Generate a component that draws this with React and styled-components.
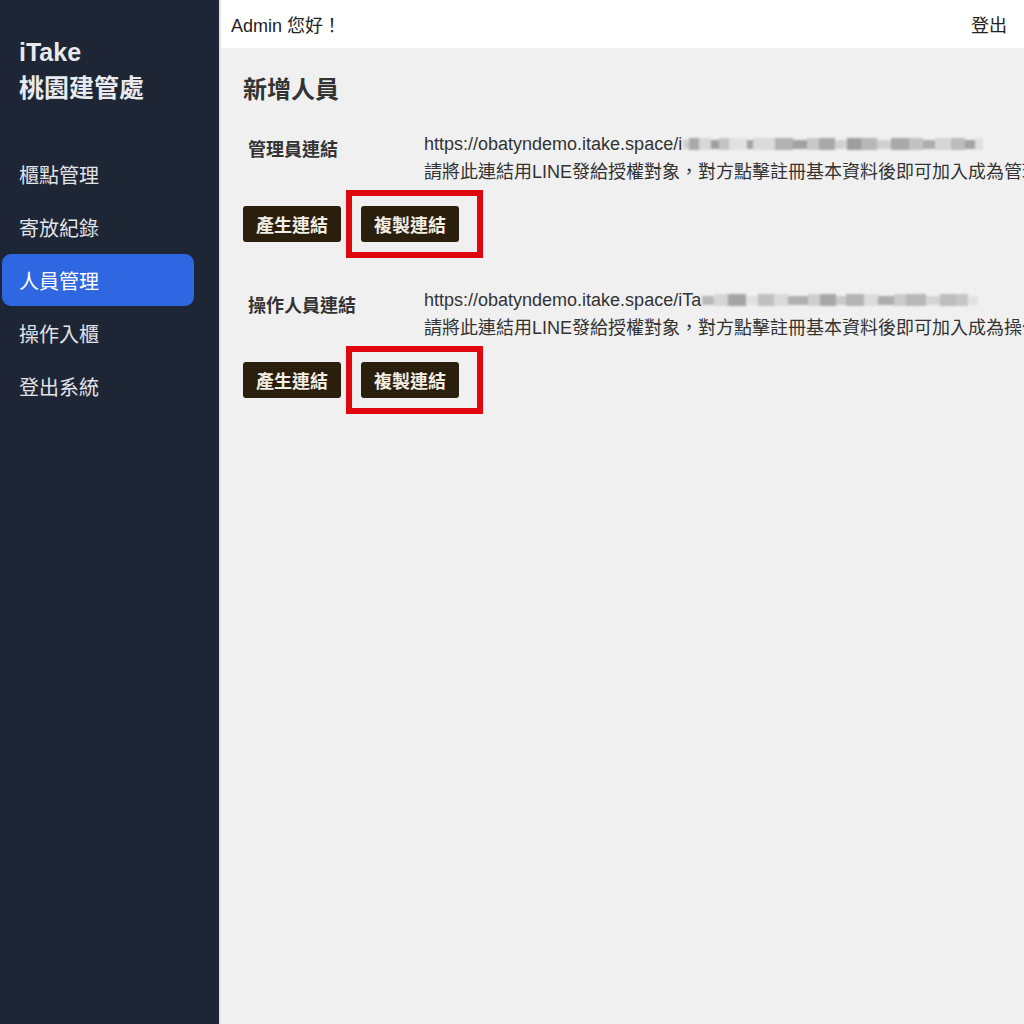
import React from "react"
import styled, { createGlobalStyle } from "styled-components"

const GlobalStyle = createGlobalStyle`
  html, body {
    margin: 0;
    padding: 0;
    height: 100%;
  }
  body {
    font-family: "Liberation Sans", "Noto Sans CJK TC", sans-serif;
    background: #f0f0f0;
  }
  #root {
    height: 100%;
  }
`

const Layout = styled.div`
  display: flex;
  height: 1024px;
  overflow: hidden;
`

const Sidebar = styled.aside`
  width: 219px;
  flex-shrink: 0;
  background: #1e2535;
  color: #e3e5ea;
  display: flex;
  flex-direction: column;
`

const Brand = styled.div`
  padding: 34px 0 0 19px;
  font-size: 25px;
  font-weight: 700;
  line-height: 36px;
  color: #e8eaee;
`

const Nav = styled.nav`
  margin-top: 42px;
  padding: 0 25px 0 2px;
  display: flex;
  flex-direction: column;
  gap: 1px;
`

const NavItem = styled.div`
  height: 52px;
  display: flex;
  align-items: center;
  padding-left: 17px;
  font-size: 20px;
  border-radius: 9px;
  color: ${(p) => (p.$active ? "#ffffff" : "#e0e3e8")};
  background: ${(p) => (p.$active ? "#2f67e3" : "transparent")};
`

const Main = styled.main`
  flex: 1;
  min-width: 0;
  display: flex;
  flex-direction: column;
  background: #f0f0f0;
  border-left: 2px solid #e4e4e4;
  color: #333;
`

const TopBar = styled.header`
  height: 48px;
  flex-shrink: 0;
  background: #fff;
  display: flex;
  align-items: center;
  justify-content: space-between;
  padding: 0 17px 0 10px;
  font-size: 18px;
  color: #222;
`

const Content = styled.section`
  padding: 26px 0 0 22px;
`

const Title = styled.h2`
  margin: 0;
  font-size: 24px;
  font-weight: 600;
  line-height: 32px;
  color: #333;
`

const Block = styled.div`
  margin-top: ${(p) => p.$top}px;
`

const LinkRow = styled.div`
  display: grid;
  grid-template-columns: 176px minmax(0, 1fr);
  margin-left: 5px;
`

const Label = styled.div`
  font-size: 18px;
  font-weight: 600;
  line-height: 28px;
  padding-top: 6px;
  color: #333;
`

const Info = styled.div`
  font-size: 18px;
  line-height: 28px;
  white-space: nowrap;
  overflow: hidden;
  color: #333;
`

const UrlLine = styled.div`
  display: flex;
  align-items: center;
`

const Blur = styled.span`
  display: inline-flex;
  align-items: center;
  height: 14px;
  margin-left: 1px;
  filter: blur(0.8px);
`

const Pixel = styled.span`
  display: inline-block;
  height: ${(p) => p.$h || 10}px;
  width: ${(p) => p.$w}px;
  background: ${(p) => p.$c};
`

const Actions = styled.div`
  display: flex;
  gap: 20px;
  margin-top: 20px;
`

const Button = styled.button`
  height: 36px;
  padding: 0 13px;
  border: none;
  border-radius: 3px;
  background: #2a1e0d;
  color: #f2eee4;
  font-family: inherit;
  font-size: 18px;
  font-weight: 600;
  cursor: pointer;
`

const Marked = styled.div`
  position: relative;
`

const Highlight = styled.span`
  position: absolute;
  top: -16px;
  bottom: -16px;
  left: -15px;
  right: -24px;
  border: 6px solid #e0070f;
  pointer-events: none;
`

const blurA = [
  [6, "#cfcfcf"], [10, "#a9a9a9"], [12, "#d8d8d8"], [8, "#9e9e9e"], [10, "#c4c4c4"],
  [18, "#e2e2e2"], [6, "#a6a6a6"], [22, "#dadada"], [18, "#b2b2b2"], [14, "#a1a1a1"],
  [12, "#c8c8c8"], [16, "#a9a9a9"], [12, "#d2d2d2"], [14, "#9d9d9d"], [16, "#b7b7b7"],
  [14, "#d0d0d0"], [18, "#a8a8a8"], [14, "#c2c2c2"], [12, "#adadad"], [16, "#d5d5d5"],
  [14, "#bcbcbc"], [10, "#a4a4a4"], [8, "#e0e0e0"],
]

const blurB = [
  [12, "#b9b9b9"], [14, "#d6d6d6"], [18, "#a4a4a4"], [12, "#e0e0e0"], [16, "#c0c0c0"],
  [14, "#dadada"], [20, "#b0b0b0"], [12, "#cfcfcf"], [16, "#a7a7a7"], [10, "#c9c9c9"],
  [18, "#b4b4b4"], [14, "#dcdcdc"], [16, "#adadad"], [12, "#cbcbcb"], [20, "#b8b8b8"],
  [14, "#d4d4d4"], [16, "#bdbdbd"], [12, "#c6c6c6"], [10, "#e2e2e2"],
]

const navItems = ["櫃點管理", "寄放紀錄", "人員管理", "操作入櫃", "登出系統"]

const links = [
  {
    label: "管理員連結",
    prefix: "https://obatyndemo.itake.space/i",
    blur: blurA,
    role: "管理員",
    top: 24,
  },
  {
    label: "操作人員連結",
    prefix: "https://obatyndemo.itake.space/iTa",
    blur: blurB,
    role: "操作人員",
    top: 44,
  },
]

function LinkBlock({ item }) {
  return (
    <Block $top={item.top}>
      <LinkRow>
        <Label>{item.label}</Label>
        <Info>
          <UrlLine>
            {item.prefix}
            <Blur>
              {item.blur.map(([w, c], i) => (
                <Pixel key={i} $w={w} $c={c} $h={i % 3 === 0 ? 9 : 12} />
              ))}
            </Blur>
          </UrlLine>
          <div>請將此連結用LINE發給授權對象，對方點擊註冊基本資料後即可加入成為{item.role}</div>
        </Info>
      </LinkRow>
      <Actions>
        <Button>產生連結</Button>
        <Marked>
          <Button>複製連結</Button>
          <Highlight />
        </Marked>
      </Actions>
    </Block>
  )
}

export default function App() {
  return (
    <>
      <GlobalStyle />
      <Layout>
        <Sidebar>
          <Brand>
            <div>iTake</div>
            <div>桃園建管處</div>
          </Brand>
          <Nav>
            {navItems.map((n) => (
              <NavItem key={n} $active={n === "人員管理"}>
                {n}
              </NavItem>
            ))}
          </Nav>
        </Sidebar>
        <Main>
          <TopBar>
            <span>Admin 您好！</span>
            <span>登出</span>
          </TopBar>
          <Content>
            <Title>新增人員</Title>
            {links.map((l) => (
              <LinkBlock key={l.label} item={l} />
            ))}
          </Content>
        </Main>
      </Layout>
    </>
  )
}
